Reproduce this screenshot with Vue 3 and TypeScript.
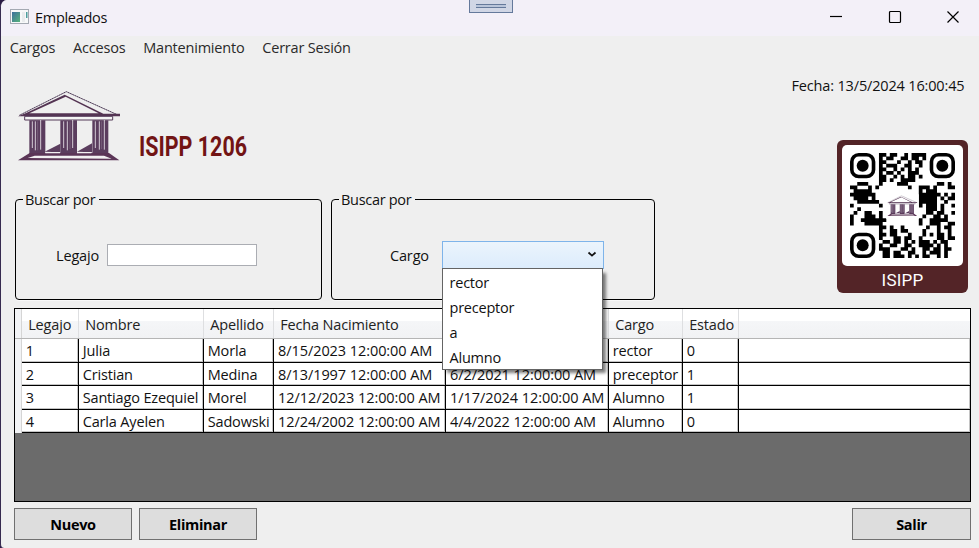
<script setup lang="ts">
import { ref } from 'vue'

interface Employee {
  legajo: number
  nombre: string
  apellido: string
  nacimiento: string
  ingreso: string
  cargo: string
  estado: number
}

const menu = ['Cargos', 'Accesos', 'Mantenimiento', 'Cerrar Sesión']
const cargos = ['rector', 'preceptor', 'a', 'Alumno']
const open = ref(true)
const legajo = ref('')
const headers = ['Legajo', 'Nombre', 'Apellido', 'Fecha Nacimiento', '', 'Cargo', 'Estado', '']
const employees: Employee[] = [
  { legajo: 1, nombre: 'Julia', apellido: 'Morla', nacimiento: '8/15/2023 12:00:00 AM', ingreso: '', cargo: 'rector', estado: 0 },
  { legajo: 2, nombre: 'Cristian', apellido: 'Medina', nacimiento: '8/13/1997 12:00:00 AM', ingreso: '6/2/2021 12:00:00 AM', cargo: 'preceptor', estado: 1 },
  { legajo: 3, nombre: 'Santiago Ezequiel', apellido: 'Morel', nacimiento: '12/12/2023 12:00:00 AM', ingreso: '1/17/2024 12:00:00 AM', cargo: 'Alumno', estado: 1 },
  { legajo: 4, nombre: 'Carla Ayelen', apellido: 'Sadowski', nacimiento: '12/24/2002 12:00:00 AM', ingreso: '4/4/2022 12:00:00 AM', cargo: 'Alumno', estado: 0 },
]

// QR modules; the three finder squares are drawn separately
const modules = [
  '........##.##..#.####........',
  '........#.##..##.##.#........',
  '........##...#..#.##.........',
  '........#.###..##..#.........',
  '........##..#.#.#.#..........',
  '........#.##.#..###..........',
  '........##..#.#.##.#.........',
  '........##.#..####...........',
  '..###...#....###........##.#.',
  '##...#.#........#..###.#...##',
  '.#####.............#.###.....',
  '#######............######.#.#',
  '.####.#............#####.#.##',
  '..######...........#####..#..',
  '#.......#..........#.###.#..#',
  '..#..................###.#...',
  '.#..##..#............##.##..#',
  '#...###.#...........#..##.#..',
  '#..#######.........#..#####..',
  '#...#####..........#..###..##',
  '........##.#..#......#..#.##.',
  '........#..##.##....#...#..#.',
  '........##.##...#...#.#.##.#.',
  '........#...##.##..#....##.##',
  '.........##.##.#.#.###.#.##..',
  '........#..##..##..####.#.#..',
  '........###...##.#..##.##.##.',
  '.........##.##..##..#.###.#..',
  '.........##.###.#.#.##..#.#..',
]
const modulePath = modules
  .map((row, y) => [...row].map((c, x) => (c === '#' ? `M${x} ${y}h1.03v1.03h-1.03z` : '')).join(''))
  .join('')
const finders = [[0, 0], [22, 0], [0, 22]]
</script>

<template>
  <div class="window">
    <header class="titlebar">
      <svg class="app-icon" width="20" height="16" viewBox="0 0 20 16">
        <defs>
          <linearGradient id="screen" x1="0" y1="0" x2="1" y2="1">
            <stop offset="0" stop-color="#3c6f9c" /><stop offset="1" stop-color="#58b37c" />
          </linearGradient>
        </defs>
        <rect x=".5" y=".5" width="18" height="14" fill="#f7f8f9" stroke="#a4a9b2" />
        <rect x="2" y="3" width="8" height="10" fill="url(#screen)" />
        <rect x="12" y="3" width="3" height="10" fill="#e9ebed" />
        <rect x="16" y="3" width="1.5" height="6" fill="#4e9d9d" />
      </svg>
      <span class="title">Empleados</span>
      <div class="grip"><i></i></div>
      <div class="controls">
        <svg width="14" height="14" viewBox="0 0 14 14"><path d="M1 6.5h12" /></svg>
        <svg width="14" height="14" viewBox="0 0 14 14"><rect x="1.5" y="1.5" width="11" height="11" rx="1" /></svg>
        <svg width="14" height="14" viewBox="0 0 14 14"><path d="M1.5 1.5l11 11M12.5 1.5l-11 11" /></svg>
      </div>
    </header>

    <nav class="menu">
      <span v-for="m in menu" :key="m">{{ m }}</span>
    </nav>

    <section class="top">
      <div class="left">
        <div class="brand">
          <svg width="102" height="70" viewBox="54 34 306 210">
            <defs>
              <g id="temple">
                <path d="M58 107L199 36L356 107" fill="none" stroke="#43304d" stroke-width="3" stroke-dasharray="5 1" />
                <path d="M54 110L80 99L194 45L310 102H360V110zM88 101H296L197 51z" fill="#543453" fill-rule="evenodd" />
                <path d="M74 110H338V121H74z" fill="#f4f4f4" stroke="#553b59" stroke-width="3" />
                <path d="M88 122H136V223H88zM181 122H231V223H181zM277 122H325V223H277z" fill="#5b3d5e" />
                <path d="M97 125V205M106 125V212M122 121V210M191 125V205M202 125V212M218 121V205M286 125V205M298 125V210M313 121V210" stroke="#f1eff2" stroke-width="2.4" />
                <path d="M113 125V212M210 125V208M305 125V208" stroke="#aaa0ad" stroke-width="1" />
                <path d="M134 216L181 192V218zM231 216L276 191V218z" fill="#5b3d5e" />
                <path d="M54 242L89 220H327L358 242z" fill="#5b3557" />
                <path d="M83 235L104 228H312L335 237zM136 217H180V221H136zM231 217H274V221H231z" fill="#f2f0f2" />
              </g>
            </defs>
            <use href="#temple" />
          </svg>
          <h1>ISIPP 1206</h1>
        </div>

        <div class="filters">
          <fieldset class="group">
            <legend>Buscar por</legend>
            <label class="field legajo"><span>Legajo</span><input v-model="legajo" type="text" /></label>
          </fieldset>
          <fieldset class="group second">
            <legend>Buscar por</legend>
            <div class="field cargo">
              <span>Cargo</span>
              <div class="combo" @click="open = !open">
                <svg width="10" height="7" viewBox="0 0 10 7"><path d="M1.5 1.5L5 4.7L8.5 1.5" /></svg>
                <ul v-if="open" class="options">
                  <li v-for="c in cargos" :key="c">{{ c }}</li>
                </ul>
              </div>
            </div>
          </fieldset>
        </div>
      </div>

      <div class="right">
        <div class="date">Fecha: 13/5/2024 16:00:45</div>
        <div class="qr">
          <div class="code">
            <svg width="105" height="105" viewBox="0 0 29 29">
              <path :d="modulePath" />
              <g v-for="[x, y] in finders" :key="`${x}-${y}`" :transform="`translate(${x} ${y})`">
                <rect x=".5" y=".5" width="6" height="6" rx="1.9" fill="none" stroke="#000" />
                <circle cx="3.5" cy="3.5" r="1.65" />
              </g>
              <rect x="10" y="11.4" width="9" height="6.8" fill="#fff" />
              <svg x="10.3" y="11.7" width="8.3" height="5.8" viewBox="54 34 306 210"><use href="#temple" /></svg>
            </svg>
          </div>
          <div class="caption">ISIPP</div>
        </div>
      </div>
    </section>

    <div class="grid">
      <div class="row head">
        <span class="handle"></span>
        <span v-for="(h, i) in headers" :key="i" class="cell">{{ h }}</span>
      </div>
      <div v-for="e in employees" :key="e.legajo" class="row">
        <span class="handle"></span>
        <span class="cell">{{ e.legajo }}</span>
        <span class="cell">{{ e.nombre }}</span>
        <span class="cell">{{ e.apellido }}</span>
        <span class="cell date-cell">{{ e.nacimiento }}</span>
        <span class="cell date-cell">{{ e.ingreso }}</span>
        <span class="cell">{{ e.cargo }}</span>
        <span class="cell">{{ e.estado }}</span>
        <span class="cell last"></span>
      </div>
    </div>

    <footer class="actions">
      <button>Nuevo</button>
      <button>Eliminar</button>
      <button class="exit">Salir</button>
    </footer>
  </div>
</template>

<style>
body { background: #2b1b45; overflow: hidden; }
</style>

<style scoped>
* { box-sizing: border-box; }
.window {
  width: 979px; height: 548px; display: flex; flex-direction: column;
  background: #efefef; border-left: 1px solid #372b50; border-radius: 7px 0 0 4px;
  font: 14.5px/20px "Open Sans", "Noto Sans", sans-serif; letter-spacing: -.16px; color: #111; overflow: hidden;
}
.titlebar { position: relative; flex: none; height: 36px; background: #f3f0f8; display: flex; align-items: center; padding: 0 19px 0 9px; }
.app-icon { margin-bottom: 3px; }
.title { margin-left: 5px; letter-spacing: -.3px; }
.grip { position: absolute; left: 468px; top: 0; width: 44px; height: 13px; background: #d0d6e5; border: 1px solid #64799b; border-top: 0; padding: 4px 6px; }
.grip i { display: block; height: 4px; background: #b9c5da; border: solid #64799b; border-width: 1px 0; }
.controls { margin-left: auto; display: flex; gap: 44.5px; padding-bottom: 2px; }
.controls svg { fill: none; stroke: #000; stroke-width: 1.2; }
.menu { flex: none; height: 24px; display: flex; gap: 17.8px; padding: 2px 8.8px 0; color: #2a2a2a; letter-spacing: -.2px; }
.top { flex: none; height: 248px; display: flex; justify-content: space-between; padding: 0 11px 0 14px; }
.brand { display: flex; height: 132px; padding: 31px 0 0 3px; }
h1 { margin: 42px 0 0 19px; font: bold 27px/28px Roboto, sans-serif; letter-spacing: 0; color: #721414; transform: scaleX(.795); transform-origin: left; white-space: nowrap; }
.filters { display: flex; gap: 9px; }
.group { margin: 0; width: 307px; height: 108px; padding: 0; border: 1px solid #000; border-radius: 4px; min-width: 0; box-shadow: 0 1px #f8f8f8; }
.group.second { width: 324px; }
legend { margin-left: 7px; padding: 0 4px 0 2px; height: 14px; line-height: 16px; white-space: nowrap; letter-spacing: -.3px; }
.field { display: flex; align-items: center; }
.field span { padding-top: 1px; }
.legajo { margin: 38px 0 0 40px; height: 22px; }
.legajo span { width: 51px; }
input { width: 150px; height: 22px; border: 1px solid #abadb3; background: #fff; padding: 0 3px; font: inherit; }
.cargo { margin: 35px 0 0 58px; height: 28px; }
.cargo > span { width: 52px; }
.combo { position: relative; width: 162px; height: 28px; border: 1px solid #7eb4ea; background: linear-gradient(#ebf4fc, #dcecfc); }
.combo > svg { position: absolute; right: 6px; top: 9px; fill: none; stroke: #111; stroke-width: 1.7; }
.options { position: absolute; z-index: 2; left: -1px; top: 26px; width: 161px; height: 102px; margin: 0; padding: 1px 0 0; list-style: none; border: 1px solid #646464; background: #fff; box-shadow: 4px 4px 3px -1px rgba(0, 0, 0, .5); }
.options li { height: 25px; line-height: 25px; padding-left: 6.5px; letter-spacing: -.22px; }
.right { display: flex; flex-direction: column; align-items: flex-end; }
.date { margin: 16px 3.6px 44px 0; white-space: nowrap; }
.qr { width: 131px; height: 153px; border-radius: 6px; background: #532427; padding: 5px; }
.code { height: 121px; border-radius: 5px; background: #fff; display: flex; align-items: center; justify-content: center; }
.caption { color: #fff; text-align: center; font: 17px/28px Roboto, "Liberation Sans", sans-serif; letter-spacing: .2px; }
.grid { flex: none; margin: 0 8px 0 13px; height: 194px; border: 1px solid #000; background: #6b6b6b; }
.row { display: grid; grid-template-columns: 7px 57px 125px 70px 172px 163px 74px 56px 1fr; height: 23.5px; background: #fff; }
.head { height: 30px; background: linear-gradient(#fff 40%, #f5f6f8 41%, #f1f2f4); border-bottom: 1px solid #b5b5b5; color: #222; }
.handle { background: #f2f3f5; border-right: 1px solid #d5d5d5; }
.cell { border-right: 1px solid #000; border-bottom: 1px solid #000; box-shadow: inset -1px -1px #c4c4c4; padding-left: 3.7px; white-space: nowrap; line-height: 24px; overflow: hidden; }
.date-cell { letter-spacing: -.07px; padding-left: 4px; }
.cell.last { border-right: 0; }
.head .cell { border-bottom: 0; border-right-color: #dedfe1; box-shadow: none; padding-left: 6.2px; line-height: 32px; letter-spacing: -.15px; }
.head .cell:last-child { border-right: 0; }
.actions { display: flex; gap: 7px; padding: 6px 8px 8px 13px; }
button { width: 118px; height: 32px; padding: 1px 0 0; border: 1px solid #707070; background: #ddd; font: bold 14.5px/20px "Open Sans", "Noto Sans", sans-serif; letter-spacing: -.3px; color: #000; }
.exit { width: 119px; margin-left: auto; }
</style>
